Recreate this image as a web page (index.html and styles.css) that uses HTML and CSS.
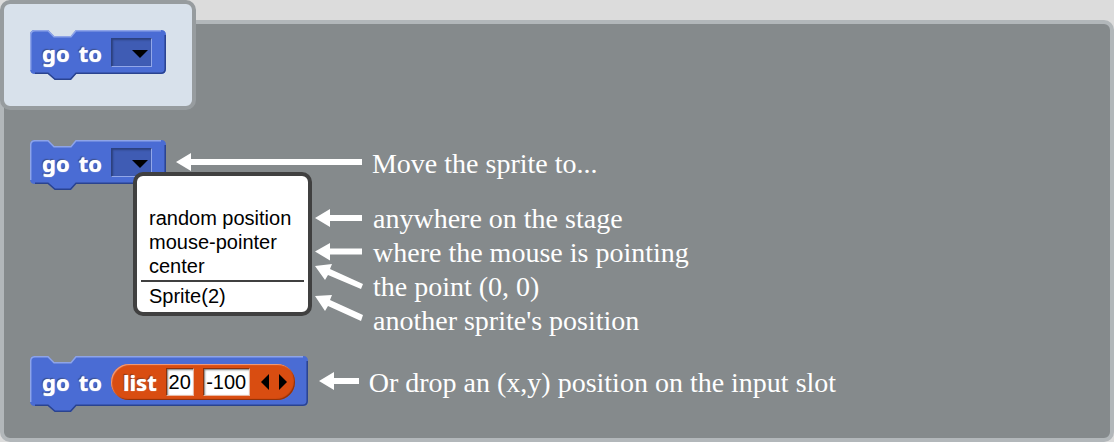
FILE: index.html
```html
<!DOCTYPE html>
<html lang="en">
<head>
<meta charset="utf-8">
<meta name="viewport" content="width=device-width, initial-scale=1">
<title>go to block help</title>
<link rel="stylesheet" href="styles.css">
</head>
<body>
<main class="panel">
  <header class="prototype">
    <div class="block">
      <svg class="block-shape" width="136" height="50" viewBox="0 0 136 50" aria-hidden="true">
        <path class="body" d="M0 5 Q0 0 5 0 H18 L24 6 H41 L46 0 H131 Q136 0 136 5 V39 Q136 44 131 44 H46 L41 50 H25 L18 44 H5 Q0 44 0 39 Z"/>
        <path class="light" d="M.7 40 V5 Q.7 .7 5 .7 H18 L24 6.7 H41 L46 .7 H131"/>
        <path class="dark" d="M135.2 5 V39 Q135 43.2 131 43.2 H46 L40.5 49.2 H25 L18 43.2 H5"/>
      </svg>
      <span class="word">go</span><span class="word">to</span>
      <span class="slot">
        <select class="slot-select" aria-label="Destination"><option></option></select>
        <svg class="slot-arrow" width="16" height="9" viewBox="0 0 16 9" aria-hidden="true"><path d="M0 0H16L8 8Z"/></svg>
      </span>
    </div>
  </header>

  <section class="row">
    <div class="block">
      <svg class="block-shape" width="136" height="50" viewBox="0 0 136 50" aria-hidden="true">
        <path class="body" d="M0 5 Q0 0 5 0 H18 L24 6 H41 L46 0 H131 Q136 0 136 5 V39 Q136 44 131 44 H46 L41 50 H25 L18 44 H5 Q0 44 0 39 Z"/>
        <path class="light" d="M.7 40 V5 Q.7 .7 5 .7 H18 L24 6.7 H41 L46 .7 H131"/>
        <path class="dark" d="M135.2 5 V39 Q135 43.2 131 43.2 H46 L40.5 49.2 H25 L18 43.2 H5"/>
      </svg>
      <span class="word">go</span><span class="word">to</span>
      <span class="slot">
        <select class="slot-select" aria-label="Destination"><option></option></select>
        <svg class="slot-arrow" width="16" height="9" viewBox="0 0 16 9" aria-hidden="true"><path d="M0 0H16L8 8Z"/></svg>
      </span>
      <div class="menu">
        <button class="item" type="button" aria-label="none"></button>
        <button class="item" type="button">random position</button>
        <button class="item" type="button">mouse-pointer</button>
        <button class="item" type="button">center</button>
        <hr class="rule">
        <button class="item" type="button">Sprite(2)</button>
      </div>
    </div>
    <svg class="pointer" width="186" height="18" viewBox="0 0 186 18" aria-hidden="true"><path d="M0 9L15 0V6H186V12H15V18Z"/></svg>
    <p class="note">Move the sprite to...</p>
  </section>

  <ul class="notes">
    <li class="note-row">
      <svg class="pointer" width="48" height="34" viewBox="0 0 48 34" aria-hidden="true"><path d="M1 16L16 7V13H48V19H16V25Z"/></svg>
      <span class="note">anywhere on the stage</span>
    </li>
    <li class="note-row">
      <svg class="pointer" width="48" height="34" viewBox="0 0 48 34" aria-hidden="true"><path d="M1 15.5L16 7V12.5H48V18.5H16V24.5Z"/></svg>
      <span class="note">where the mouse is pointing</span>
    </li>
    <li class="note-row">
      <svg class="pointer" width="48" height="34" viewBox="0 0 48 34" aria-hidden="true"><path d="M1 -4L18 -6L16 -1L49 14L47 19L14 5L11 10Z"/></svg>
      <span class="note">the point (0, 0)</span>
    </li>
    <li class="note-row">
      <svg class="pointer" width="48" height="34" viewBox="0 0 48 34" aria-hidden="true"><path d="M1 -8L18 -9L16 -4L49 11L47 17L14 2L11 7Z"/></svg>
      <span class="note">another sprite's position</span>
    </li>
  </ul>

  <section class="row">
    <div class="block">
      <svg class="block-shape" width="278" height="56" viewBox="0 0 278 56" aria-hidden="true">
        <path class="body" d="M0 5 Q0 0 5 0 H18 L24 6 H41 L46 0 H273 Q278 0 278 5 V45 Q278 50 273 50 H46 L41 56 H25 L18 50 H5 Q0 50 0 45 Z"/>
        <path class="light" d="M.7 46 V5 Q.7 .7 5 .7 H18 L24 6.7 H41 L46 .7 H273"/>
        <path class="dark" d="M277.2 5 V45 Q277 49.2 273 49.2 H46 L40.5 55.2 H25 L18 49.2 H5"/>
      </svg>
      <span class="word">go</span><span class="word">to</span>
      <div class="reporter">
        <span class="word">list</span>
        <input class="field short" type="text" value="20" aria-label="x">
        <input class="field" type="text" value="-100" aria-label="y">
        <span class="steppers">
          <button class="step" type="button" aria-label="Remove item"><svg width="8" height="16" viewBox="0 0 8 16"><path d="M8 0V16L0 8Z"/></svg></button>
          <button class="step" type="button" aria-label="Add item"><svg width="8" height="16" viewBox="0 0 8 16"><path d="M0 0V16L8 8Z"/></svg></button>
        </span>
      </div>
    </div>
    <svg class="pointer" width="40" height="18" viewBox="0 0 40 18" aria-hidden="true"><path d="M0 9L15 0V6H40V12H15V18Z"/></svg>
    <p class="note">Or drop an (x,y) position on the input slot</p>
  </section>
</main>
</body>
</html>
```
FILE: styles.css
```css
* {
  box-sizing: border-box;
}

body {
  margin: 0;
  padding-top: 20px;
  background: #dcdcdc;
  font-family: "Liberation Sans", Arial, sans-serif;
}

.panel {
  display: flex;
  flex-direction: column;
  align-items: flex-start;
  padding: 0 26px 26px;
  border: 4px solid #b2b7ba;
  border-radius: 10px;
  background: #858a8c;
}

.prototype {
  margin: -24px 0 30px -30px;
  padding: 26px;
  border: 4px solid #979c9f;
  border-radius: 10px;
  background: #d8e1eb;
}

/* Command blocks: an SVG outline behind a row of labels and slots */
.block {
  position: relative;
  display: flex;
  align-items: center;
  gap: 9px;
  padding: 0 14px 6px 12px;
}

.block-shape {
  position: absolute;
  top: 0;
  left: 0;
}

.body {
  fill: #4a6cd4;
}

.light,
.dark {
  fill: none;
  stroke-width: 1.5;
}

.light {
  stroke: #8ea4e8;
}

.dark {
  stroke: #2a438f;
}

.word {
  position: relative;
  padding-top: 2px;
  color: #fff;
  font: bold 22px/28px "Noto Sans", sans-serif;
  text-shadow: 0 0 1px #fff, -1px -1px 1px #2c417f;
}

.slot {
  position: relative;
  display: flex;
  padding: 8px 0 7px;
}

.slot-select {
  width: 41px;
  height: 29px;
  border: 1px solid;
  border-color: #2c417f #92a7e9 #92a7e9 #2c417f;
  border-radius: 0;
  background: #3f5cb4;
  box-shadow: inset 1px 1px 2px #2c417f;
  appearance: none;
}

.slot-arrow {
  position: absolute;
  top: 20px;
  right: 4px;
  pointer-events: none;
}

.menu {
  position: absolute;
  z-index: 1;
  top: 32px;
  left: 103px;
  display: flex;
  flex-direction: column;
  width: max-content;
  padding: 6px 4px 4px;
  border: 4px solid #404040;
  border-radius: 10px;
  background: #fff;
}

.item {
  height: 24px;
  padding: 0 13px 0 8px;
  border: 0;
  background: none;
  color: #000;
  font: 20px/24px "Liberation Sans", Arial, sans-serif;
  text-align: left;
}

.rule {
  width: 100%;
  height: 2px;
  margin: 2px 0;
  border: 0;
  background: #404040;
}

.row {
  display: flex;
  align-items: center;
  gap: 10px;
}

.pointer {
  flex: none;
  overflow: visible;
  fill: #fff;
}

.row > .pointer {
  margin-bottom: 6px;
}

.note {
  margin: 0;
  color: #fff;
  font: 28px/34px "Liberation Serif", "Times New Roman", serif;
}

.row > .note {
  padding-bottom: 3px;
}

.notes {
  margin: 12px 0 18px 284px;
  padding: 0;
  list-style: none;
}

.note-row {
  display: flex;
  gap: 11px;
}

.reporter {
  position: relative;
  display: flex;
  align-items: center;
  gap: 9px;
  height: 36px;
  margin: 8px 0 6px;
  padding: 0 8px 0 12px;
  border-radius: 18px;
  background: #d94d11;
  box-shadow: inset 1px 1px 1px #f0a182, inset -1px -1px 1px #8a310b;
}

.reporter .word {
  padding: 0;
  text-shadow: 0 0 1px #fff, -1px -1px 1px #822e0a;
}

.field {
  width: 47px;
  height: 28px;
  padding: 0;
  border: 1px solid;
  border-color: #8a310b #e8b8a4 #e8b8a4 #8a310b;
  border-radius: 0;
  background: #fff;
  box-shadow: inset 1px 1px 2px #777;
  color: #000;
  font: 20px/26px "Liberation Sans", Arial, sans-serif;
  text-align: center;
}

.short {
  width: 28px;
}

.steppers {
  display: flex;
  gap: 10px;
  padding-left: 2px;
}

.step {
  display: flex;
  padding: 0;
  border: 0;
  background: none;
}
```
